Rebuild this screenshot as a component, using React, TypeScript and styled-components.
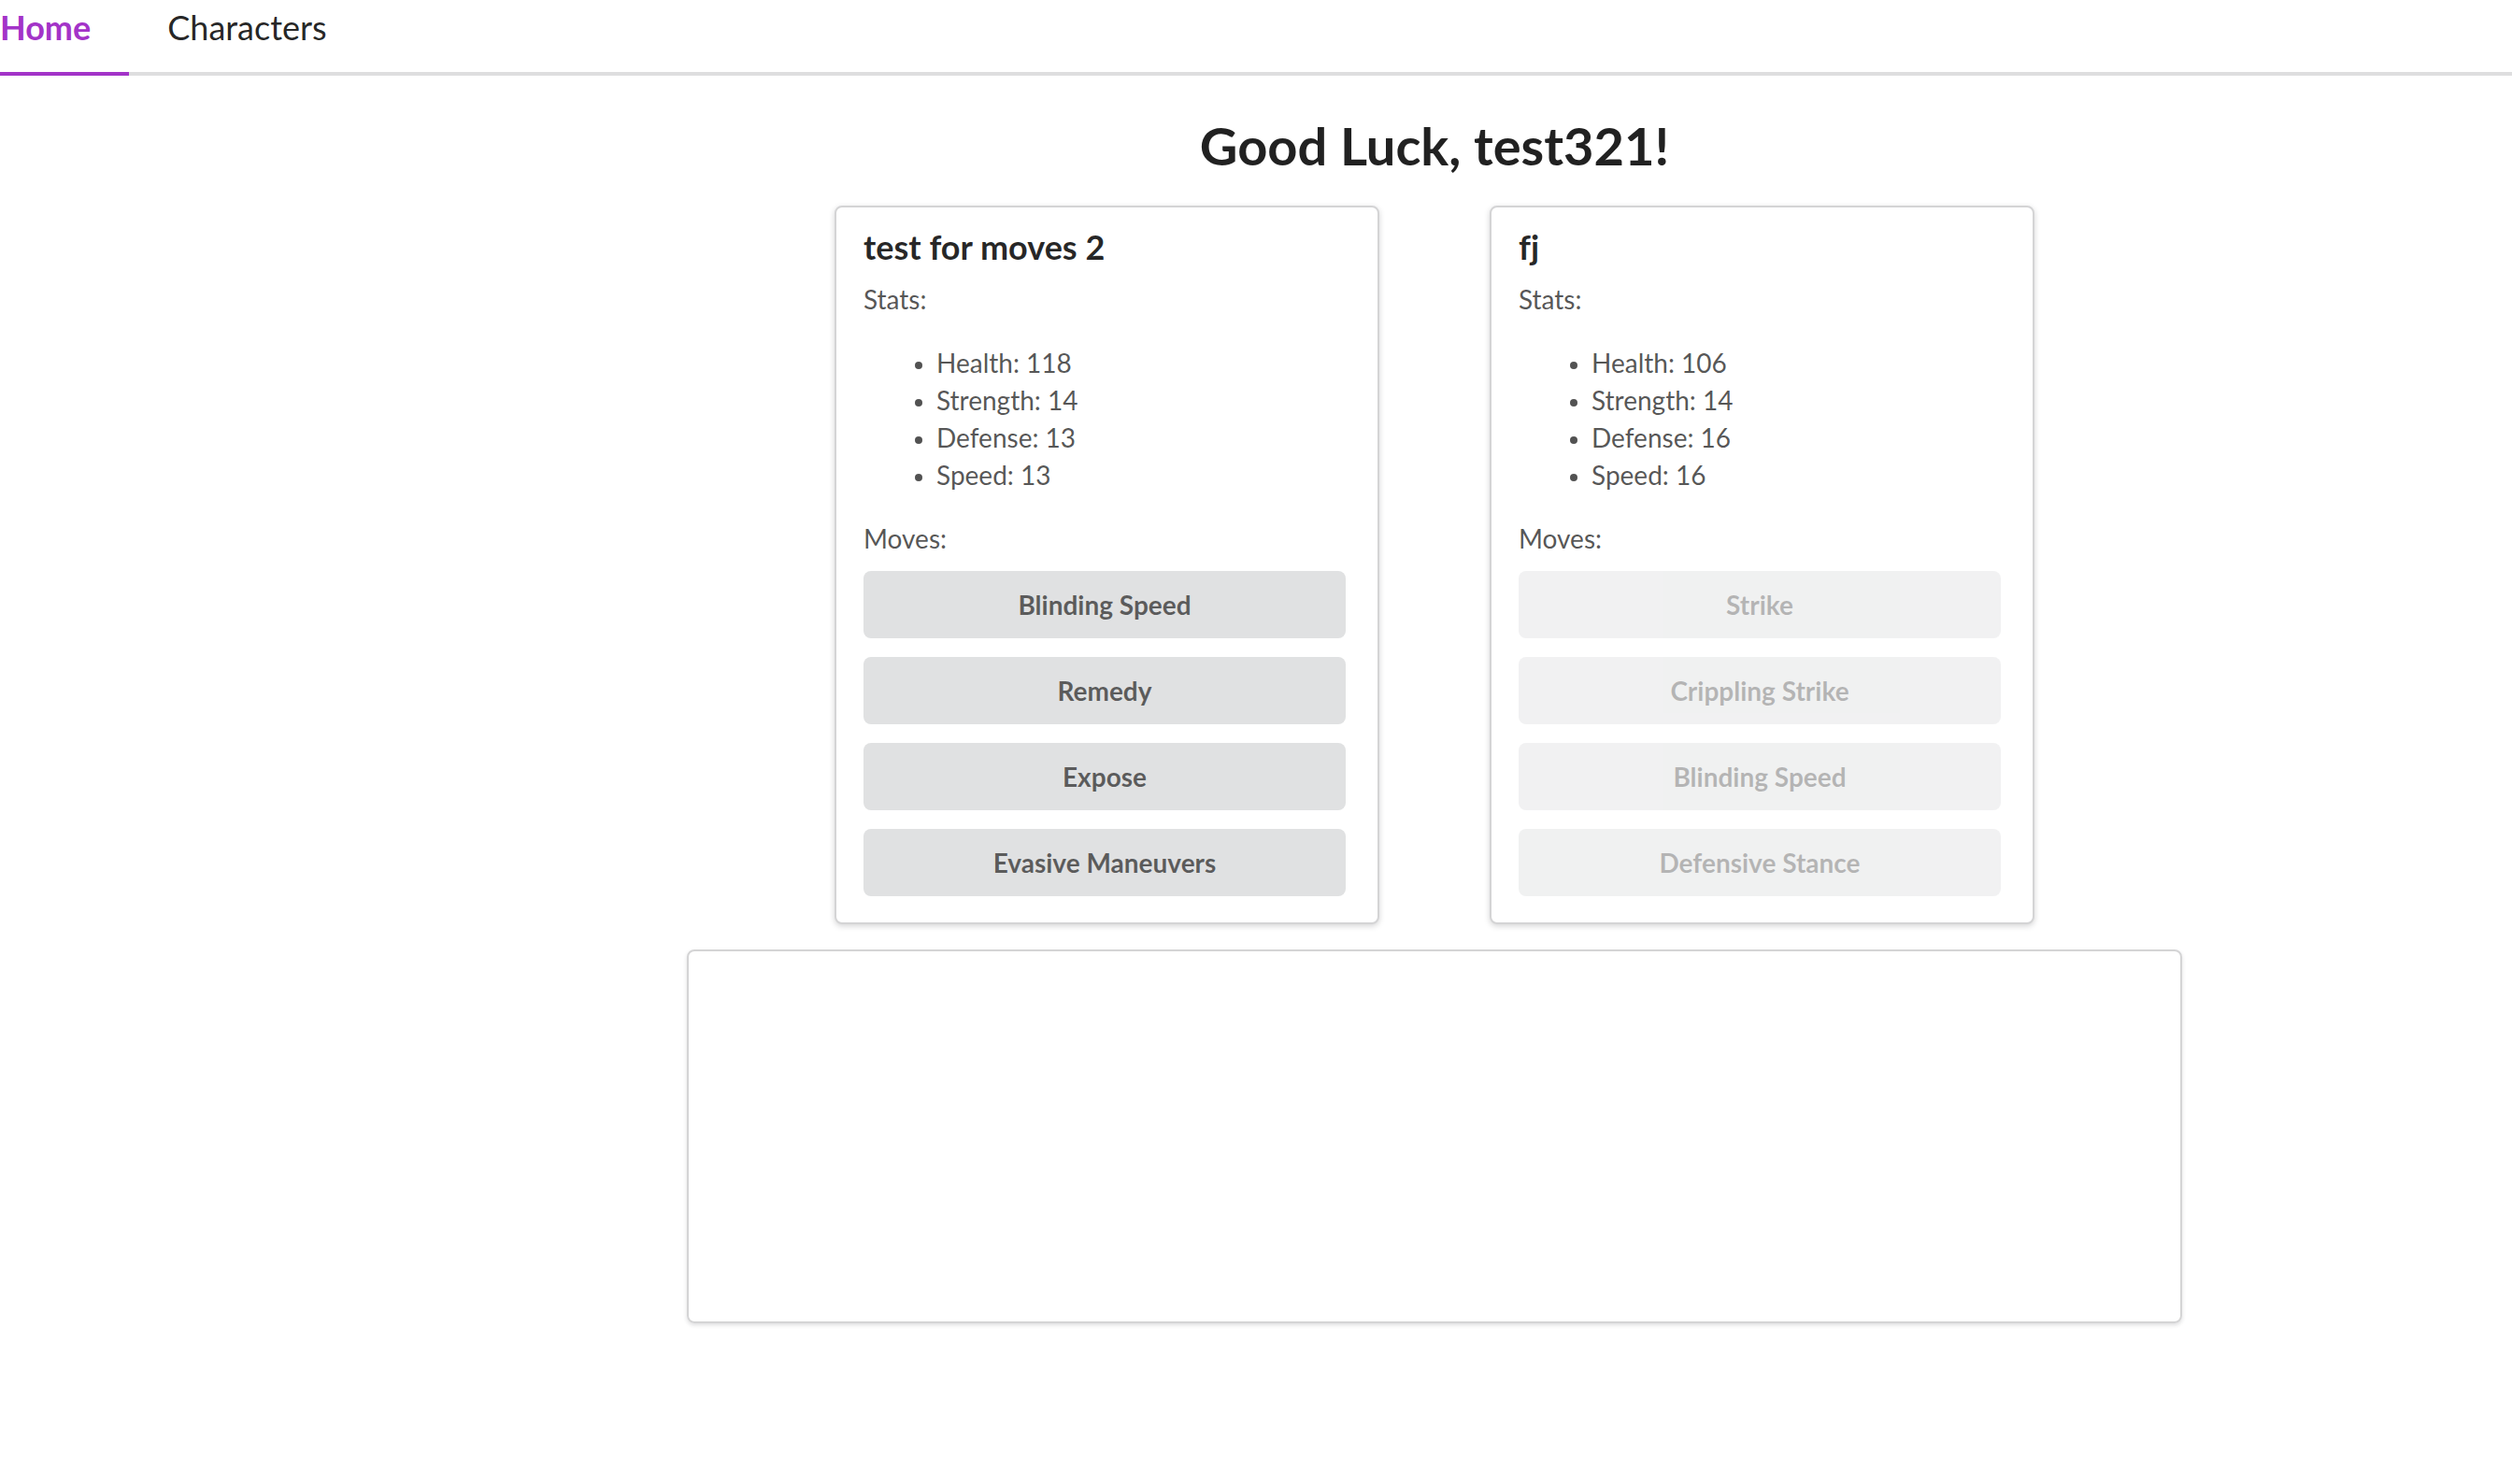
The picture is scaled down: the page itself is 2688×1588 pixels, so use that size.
import React from 'react';
import styled, { createGlobalStyle } from 'styled-components';

const GlobalStyle = createGlobalStyle`
  html, body {
    margin: 0;
    padding: 0;
    background: #ffffff;
    font-family: Lato, "Helvetica Neue", Arial, sans-serif;
    font-size: 28px;
    line-height: 40px;
    font-variant-ligatures: none;
    color: rgba(0, 0, 0, 0.87);
  }
  * {
    box-sizing: border-box;
  }
`;

const Page = styled.div`
  width: 2688px;
  min-height: 1588px;
  overflow: hidden;
`;

const Menu = styled.nav`
  display: flex;
  align-items: flex-end;
  border-bottom: 4px solid rgba(34, 36, 38, 0.15);
`;

const MenuItems = styled.div`
  display: flex;
  margin-left: -41px;
  margin-bottom: -4px;
`;

const MenuItem = styled.a<{ $active?: boolean }>`
  display: block;
  padding: 11px 41px 30px;
  font-size: 36px;
  line-height: 36px;
  font-weight: ${(p) => (p.$active ? 700 : 400)};
  color: ${(p) => (p.$active ? '#a333c8' : 'rgba(0, 0, 0, 0.87)')};
  border-bottom: 4px solid ${(p) => (p.$active ? '#a333c8' : 'transparent')};
  cursor: pointer;
`;

const Content = styled.main`
  display: flex;
  flex-direction: column;
  align-items: center;
  width: 1600px;
  margin: 39px 0 0 735px;
`;

const Title = styled.h1`
  margin: 0;
  font-size: 56px;
  line-height: 72px;
  font-weight: 700;
  text-align: center;
  color: rgba(0, 0, 0, 0.87);
`;

const CardRow = styled.div`
  display: flex;
  gap: 118px;
  margin-top: 28px;
`;

const Card = styled.section`
  width: 583px;
  padding: 19px 34px 28px 29px;
  border: 2px solid #d4d4d5;
  border-radius: 8px;
  box-shadow: 0 2px 6px 0 #d4d4d5;
  background: #fff;
`;

const CardHeader = styled.h2`
  margin: 0;
  font-size: 36px;
  line-height: 46px;
  font-weight: 700;
  color: rgba(0, 0, 0, 0.85);
`;

const Label = styled.div`
  color: rgba(0, 0, 0, 0.68);
  margin-top: 13px;
`;

const StatList = styled.ul`
  margin: 28px 0 28px;
  padding-left: 78px;
  color: rgba(0, 0, 0, 0.68);

  li::marker {
    font-size: 24px;
  }
`;

const MoveLabel = styled.div`
  color: rgba(0, 0, 0, 0.68);
`;

const MoveList = styled.div`
  display: flex;
  flex-direction: column;
  gap: 20px;
  margin-top: 15px;
`;

const MoveButton = styled.button`
  width: 100%;
  padding: 22px 42px;
  border: none;
  border-radius: 8px;
  background: #e0e1e2;
  color: rgba(0, 0, 0, 0.6);
  font-family: Lato, "Helvetica Neue", Arial, sans-serif;
  font-size: 28px;
  line-height: 28px;
  font-weight: 700;
  font-variant-ligatures: none;
  text-align: center;
  cursor: pointer;

  &:disabled {
    opacity: 0.45;
    cursor: default;
  }
`;

const LogBox = styled.div`
  width: 1600px;
  height: 400px;
  margin-top: 27px;
  border: 2px solid #d4d4d5;
  border-radius: 8px;
  box-shadow: 0 2px 4px 0 rgba(34, 36, 38, 0.15);
`;

type Fighter = {
  name: string;
  stats: { label: string; value: number }[];
  moves: string[];
  disabled?: boolean;
};

const fighters: Fighter[] = [
  {
    name: 'test for moves 2',
    stats: [
      { label: 'Health', value: 118 },
      { label: 'Strength', value: 14 },
      { label: 'Defense', value: 13 },
      { label: 'Speed', value: 13 },
    ],
    moves: ['Blinding Speed', 'Remedy', 'Expose', 'Evasive Maneuvers'],
  },
  {
    name: 'fj',
    stats: [
      { label: 'Health', value: 106 },
      { label: 'Strength', value: 14 },
      { label: 'Defense', value: 16 },
      { label: 'Speed', value: 16 },
    ],
    moves: ['Strike', 'Crippling Strike', 'Blinding Speed', 'Defensive Stance'],
    disabled: true,
  },
];

function FighterCard({ fighter }: { fighter: Fighter }) {
  return (
    <Card>
      <CardHeader>{fighter.name}</CardHeader>
      <Label>Stats:</Label>
      <StatList>
        {fighter.stats.map((s) => (
          <li key={s.label}>
            {s.label}: {s.value}
          </li>
        ))}
      </StatList>
      <MoveLabel>Moves:</MoveLabel>
      <MoveList>
        {fighter.moves.map((m) => (
          <MoveButton key={m} disabled={fighter.disabled}>
            {m}
          </MoveButton>
        ))}
      </MoveList>
    </Card>
  );
}

function App() {
  return (
    <Page>
      <GlobalStyle />
      <Menu>
        <MenuItems>
          <MenuItem $active>Home</MenuItem>
          <MenuItem>Characters</MenuItem>
        </MenuItems>
      </Menu>
      <Content>
        <Title>Good Luck, test321!</Title>
        <CardRow>
          {fighters.map((f) => (
            <FighterCard key={f.name} fighter={f} />
          ))}
        </CardRow>
        <LogBox />
      </Content>
    </Page>
  );
}

export default App;
